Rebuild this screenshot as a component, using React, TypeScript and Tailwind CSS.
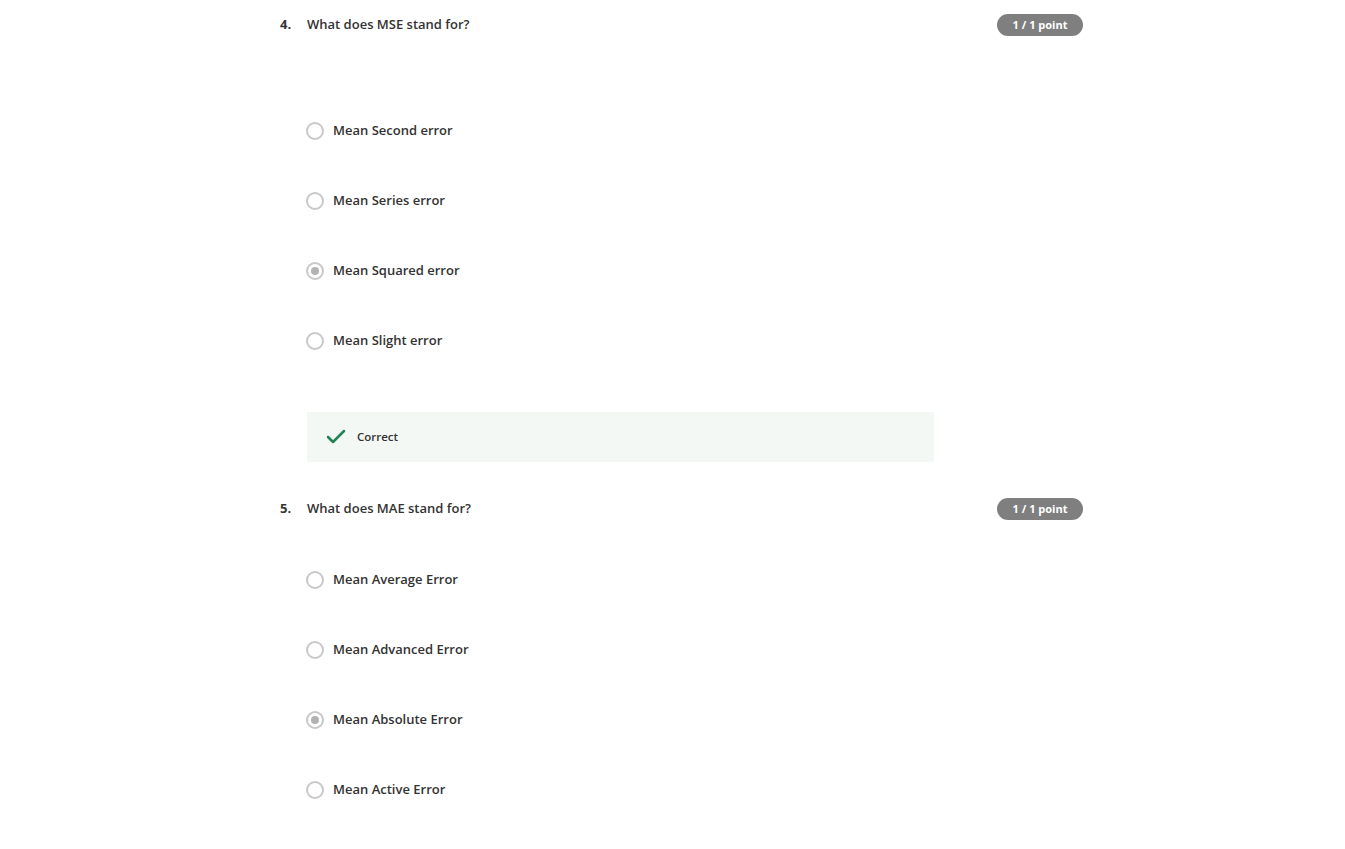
import { Check } from 'lucide-react';

interface Option {
  label: string;
  selected?: boolean;
}

interface Question {
  num: number;
  text: string;
  options: Option[];
  gapTop: string;
  feedback?: boolean;
}

const questions: Question[] = [
  {
    num: 4,
    text: 'What does MSE stand for?',
    gapTop: 'mt-[85px]',
    feedback: true,
    options: [
      { label: 'Mean Second error' },
      { label: 'Mean Series error' },
      { label: 'Mean Squared error', selected: true },
      { label: 'Mean Slight error' },
    ],
  },
  {
    num: 5,
    text: 'What does MAE stand for?',
    gapTop: 'mt-[50px]',
    options: [
      { label: 'Mean Average Error' },
      { label: 'Mean Advanced Error' },
      { label: 'Mean Absolute Error', selected: true },
      { label: 'Mean Active Error' },
    ],
  },
];

function Radio({ selected }: { selected?: boolean }) {
  return (
    <div className="w-[18px] h-[18px] rounded-full border-2 border-[#c8c8c8] bg-white flex items-center justify-center shrink-0">
      {selected && <div className="w-[8px] h-[8px] rounded-full bg-[#b3b3b3]" />}
    </div>
  );
}

function QuestionBlock({ q }: { q: Question }) {
  return (
    <div>
      {/* header */}
      <div className="flex items-center h-[22px]">
        <span className="w-[27px] text-[13px] font-bold text-[#333333]">{q.num}.</span>
        <span className="flex-1 text-[13px] font-semibold text-[#333333]">{q.text}</span>
        <span className="h-[22px] w-[86px] justify-center rounded-full bg-[#7f7f7f] text-white text-[11px] font-bold flex items-center">
          1 / 1 point
        </span>
      </div>

      {/* options */}
      <div className={`${q.gapTop} pl-[26px] flex flex-col gap-[50px]`}>
        {q.options.map((o) => (
          <div key={o.label} className="flex items-center h-[20px] gap-[9px]">
            <Radio selected={o.selected} />
            <span className="text-[13px] font-semibold text-[#333333]">{o.label}</span>
          </div>
        ))}
      </div>

      {q.feedback && (
        <div className="mt-[61px] ml-[27px] w-[627px] h-[50px] bg-[#f3f8f5] flex items-center pl-[17px] gap-[9px]">
          <Check size={24} strokeWidth={2.5} className="text-[#1f8354]" />
          <span className="text-[11.5px] font-semibold text-[#333333]">Correct</span>
        </div>
      )}
    </div>
  );
}

export default function App() {
  return (
    <div className="min-h-screen bg-white" style={{ fontFamily: '"Open Sans", "Noto Sans", sans-serif' }}>
      <div className="pl-[280px] pt-[14px] w-[1083px] flex flex-col gap-[36px]">
        {questions.map((q) => (
          <QuestionBlock key={q.num} q={q} />
        ))}
      </div>
    </div>
  );
}
